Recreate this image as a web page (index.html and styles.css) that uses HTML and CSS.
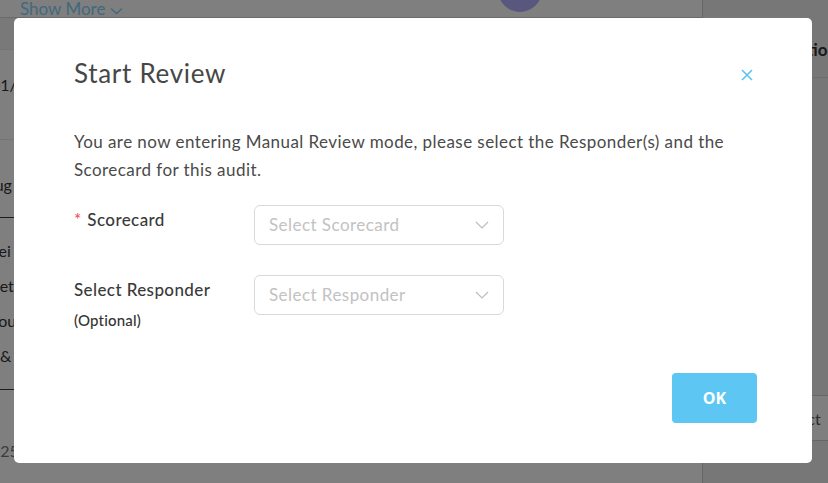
FILE: index.html
```html
<!DOCTYPE html>
<html>
<head>
<meta charset="utf-8">
<link rel="stylesheet" href="styles.css">
</head>
<body>
<div class="page">
  <div class="main">
    <div class="topbar">
      <span class="show-more">Show More <svg class="chev" width="13" height="8" viewBox="0 0 13 8"><path d="M1 1.5l5.5 5 5.5-5" fill="none" stroke="currentColor" stroke-width="1.4"/></svg></span>
      <span class="avatar"></span>
    </div>
    <div class="table">
      <div class="row head"></div>
      <div class="row r1"><span>01/</span></div>
      <div class="row r2"><span>Aug</span></div>
      <div class="row r3"><span>Rei</span><span>Sets</span><span>You</span><span>&amp;</span></div>
      <div class="row r4"><span>025,</span></div>
    </div>
  </div>
  <div class="side">
    <div class="side-head"><span>Action</span></div>
    <div class="side-body">
      <div class="side-box">Select</div>
    </div>
  </div>
</div>

<div class="overlay">
  <div class="modal">
    <div class="modal-head">
      <h2 class="modal-title">Start Review</h2>
      <button class="close" aria-label="Close">
        <svg width="12" height="12" viewBox="0 0 12 12"><path d="M1 1l10 10M11 1L1 11" stroke="#5bc5f2" stroke-width="1.6" fill="none"/></svg>
      </button>
    </div>
    <p class="intro">You are now entering Manual Review mode, please select the Responder(s) and the Scorecard for this audit.</p>
    <div class="form">
      <div class="label label-req"><span class="req">*</span> Scorecard</div>
      <div class="select"><span>Select Scorecard</span><svg width="14" height="8" viewBox="0 0 14 8"><path d="M1 1l6 6 6-6" fill="none" stroke="#bdbdbd" stroke-width="1.2"/></svg></div>
      <div class="label">Select Responder<small>(Optional)</small></div>
      <div class="select"><span>Select Responder</span><svg width="14" height="8" viewBox="0 0 14 8"><path d="M1 1l6 6 6-6" fill="none" stroke="#bdbdbd" stroke-width="1.2"/></svg></div>
    </div>
    <div class="footer">
      <button class="ok">OK</button>
    </div>
  </div>
</div>
</body>
</html>
```

FILE: styles.css
```css
* { box-sizing: border-box; }
html, body { margin: 0; padding: 0; }
body {
  width: 828px;
  height: 483px;
  overflow: hidden;
  font-family: Lato, "Open Sans", sans-serif;
  background: #fff;
  position: relative;
}
.page {
  display: flex;
  height: 483px;
}
.main {
  width: 702px;
  flex-shrink: 0;
  display: flex;
  flex-direction: column;
}
.topbar {
  height: 18px;
  border-bottom: 1px solid #d6d6d6;
  display: flex;
  align-items: flex-end;
  padding-left: 20px;
  position: relative;
  overflow: hidden;
}
.show-more {
  color: #83d2fb;
  font-size: 17px;
  line-height: 20px;
  margin-bottom: -2px;
  white-space: nowrap;
}
.chev { vertical-align: middle; }
.avatar {
  position: absolute;
  left: 498px;
  top: -32px;
  width: 44px;
  height: 44px;
  border-radius: 50%;
  background: #b4aeff;
}
.table { display: flex; flex-direction: column; }
.row {
  border-bottom: 1px solid #e8e8e8;
  color: #333;
  font-size: 16px;
  display: flex;
  flex-direction: column;
  overflow: hidden;
  white-space: nowrap;
}
.row span { line-height: 35px; }
.row.head { height: 32px; background: #f2f2f2; }
.row.r1 { height: 90px; padding-top: 17px; }
.row.r1 span { margin-left: -9px; }
.row.r2 { height: 78px; border-bottom-color: #3a3a3a; padding-top: 27px; }
.row.r2 span { margin-left: -16px; }
.row.r3 { height: 172px; border-bottom-color: #3a3a3a; padding-top: 15px; }
.row.r3 span:nth-child(1) { margin-left: -11px; }
.row.r3 span:nth-child(2) { margin-left: -9px; }
.row.r3 span:nth-child(3) { margin-left: -10px; }
.row.r3 span:nth-child(4) { margin-left: 0; }
.row.r4 { height: 92px; border-bottom: none; justify-content: flex-end; padding-bottom: 14px; }
.row.r4 span { margin-left: -9px; color: #777; }
.side {
  flex: 1;
  min-width: 0;
  background: #efefef;
  border-left: 1px solid #d0d0d0;
  display: flex;
  flex-direction: column;
}
.side-head {
  height: 78px;
  border-bottom: 1px solid #dcdcdc;
  padding: 39px 0 0 84px;
  font-weight: 700;
  font-size: 17px;
  color: #333;
  white-space: nowrap;
  overflow: hidden;
}
.side-body { flex: 1; padding: 317px 0 0 38px; }
.side-box {
  height: 46px;
  border: 1px solid #cfcfcf;
  border-right: none;
  background: #fff;
  color: #555;
  font-size: 16px;
  padding: 13px 0 0 36px;
  white-space: nowrap;
  overflow: hidden;
}

.overlay {
  position: absolute;
  inset: 0;
  background: rgba(0, 0, 0, 0.5);
  padding: 18px 16px 20px 14px;
}
.modal {
  width: 798px;
  height: 445px;
  background: #fff;
  border-radius: 5px;
  padding: 39px 55px 0 60px;
  display: flex;
  flex-direction: column;
  color: #4a4a4a;
}
.modal-head {
  display: flex;
  justify-content: space-between;
  align-items: center;
  height: 32px;
}
.modal-title {
  margin: 0;
  font-size: 26px;
  font-weight: 400;
  color: #474747;
  letter-spacing: 0.7px;
}
.close {
  border: 0;
  background: none;
  padding: 0;
  margin: 4px 4px 0 0;
  width: 12px;
  height: 12px;
  display: flex;
}
.intro {
  margin: 39px 0 0;
  font-size: 17px;
  line-height: 28px;
  color: #4a4a4a;
  max-width: 670px;
  letter-spacing: 0.44px;
}
.form {
  display: grid;
  grid-template-columns: 180px 250px;
  row-gap: 30px;
  margin-top: 21px;
}
.label {
  font-size: 17px;
  color: #3a3a3a;
  font-weight: 500;
  line-height: 20px;
  padding-top: 5px;
  letter-spacing: 0.4px;
  display: flex;
  flex-direction: column;
}
.label small {
  font-size: 15px;
  margin-top: 10px;
  color: #333;
  letter-spacing: 0.2px;
}
.label-req { display: block; }
.req { color: #f5434e; font-weight: 400; margin-right: 1px; }
.select {
  height: 40px;
  border: 1px solid #d9d9d9;
  border-radius: 6px;
  display: flex;
  align-items: center;
  justify-content: space-between;
  padding: 0 14px 1px 14px;
  color: #c2c2c2;
  font-size: 17px;
  letter-spacing: 0.45px;
}
.footer {
  display: flex;
  justify-content: flex-end;
  margin-top: auto;
  padding-bottom: 40px;
}
.ok {
  width: 85px;
  height: 50px;
  border: 0;
  border-radius: 4px;
  background: #5dc6f2;
  color: #fff;
  font-family: "Open Sans", sans-serif;
  font-weight: 700;
  font-size: 16px;
}
```
